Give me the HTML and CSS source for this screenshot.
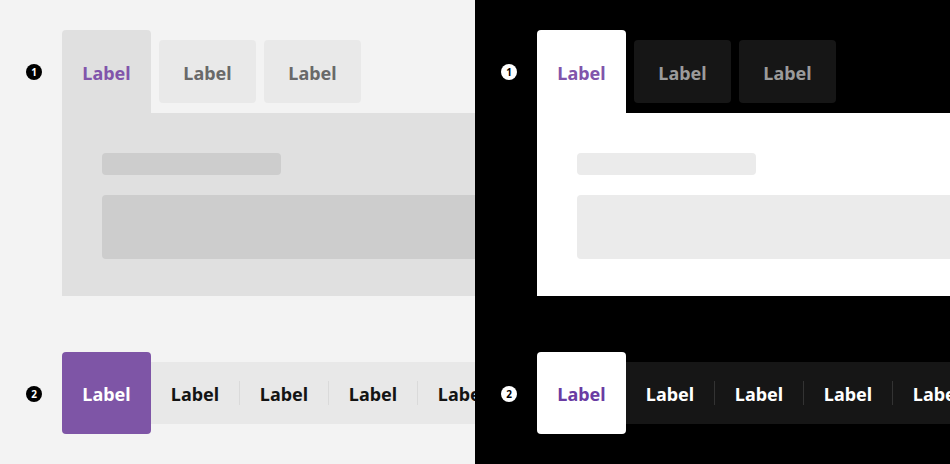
FILE: index.html
```html
<!DOCTYPE html>
<html>
<head>
<meta charset="utf-8">
<link rel="stylesheet" href="styles.css">
</head>
<body>
<div class="page">
  <section class="half light">
    <div class="example ex1">
      <span class="marker">1</span>
      <div class="tabs-block">
        <div class="tabrow">
          <div class="tab active">Label</div>
          <div class="tab">Label</div>
          <div class="tab">Label</div>
        </div>
        <div class="panel">
          <div class="sk sk-title"></div>
          <div class="sk sk-body"></div>
        </div>
      </div>
    </div>
    <div class="example ex2">
      <span class="marker">2</span>
      <div class="seg">
        <div class="seg-active">Label</div>
        <div class="seg-bar">
          <div class="seg-item">Label</div>
          <span class="sep"></span>
          <div class="seg-item">Label</div>
          <span class="sep"></span>
          <div class="seg-item">Label</div>
          <span class="sep"></span>
          <div class="seg-item">Label</div>
          <span class="sep"></span>
          <div class="seg-item">Label</div>
        </div>
      </div>
    </div>
  </section>
  <section class="half dark">
    <div class="example ex1">
      <span class="marker">1</span>
      <div class="tabs-block">
        <div class="tabrow">
          <div class="tab active">Label</div>
          <div class="tab">Label</div>
          <div class="tab">Label</div>
        </div>
        <div class="panel">
          <div class="sk sk-title"></div>
          <div class="sk sk-body"></div>
        </div>
      </div>
    </div>
    <div class="example ex2">
      <span class="marker">2</span>
      <div class="seg">
        <div class="seg-active">Label</div>
        <div class="seg-bar">
          <div class="seg-item">Label</div>
          <span class="sep"></span>
          <div class="seg-item">Label</div>
          <span class="sep"></span>
          <div class="seg-item">Label</div>
          <span class="sep"></span>
          <div class="seg-item">Label</div>
          <span class="sep"></span>
          <div class="seg-item">Label</div>
        </div>
      </div>
    </div>
  </section>
</div>
</body>
</html>
```

FILE: styles.css
```css
* { box-sizing: border-box; }
html, body { margin: 0; padding: 0; }
body {
  font-family: "Noto Sans", "Open Sans", sans-serif;
  width: 950px;
  height: 464px;
  overflow: hidden;
}
.page {
  display: flex;
  width: 950px;
  height: 464px;
}
.half {
  width: 475px;
  height: 464px;
  flex: none;
  overflow: hidden;
  padding: 30px 0 0 26px;
  display: flex;
  flex-direction: column;
  gap: 56px;
}
.light { background: #f3f3f3; }
.dark { background: #000000; }

.example {
  display: flex;
  align-items: flex-start;
  gap: 20px;
}
.marker {
  flex: none;
  width: 16px;
  height: 16px;
  border-radius: 50%;
  margin-top: 34px;
  display: flex;
  align-items: center;
  justify-content: center;
  font-size: 10px;
  font-weight: 700;
  line-height: 1;
}
.light .marker { background: #000; color: #fff; }
.dark .marker { background: #fff; color: #000; }

.tabs-block { flex: none; width: 700px; }
.tabrow {
  display: flex;
  align-items: flex-start;
  gap: 8px;
}
.tab {
  width: 97px;
  height: 63px;
  margin-top: 10px;
  border-radius: 4px;
  display: flex;
  align-items: center;
  justify-content: center;
  font-size: 18px;
  font-weight: 700;
  padding-top: 2px;
}
.tab.active {
  width: 89px;
  height: 83px;
  margin-top: 0;
  border-radius: 4px 4px 0 0;
}
.panel {
  height: 183px;
  padding: 40px;
  display: flex;
  flex-direction: column;
  gap: 20px;
}
.sk { border-radius: 4px; flex: none; }
.sk-title { width: 179px; height: 22px; }
.sk-body { width: 620px; height: 64px; }

.light .tab { background: #e9e9e9; color: #696969; }
.light .tab.active { background: #e0e0e0; color: #8155ab; }
.light .panel { background: #e0e0e0; }
.light .sk { background: #cdcdcd; }

.dark .tab { background: #161616; color: #9b9b9b; }
.dark .tab.active { background: #ffffff; color: #8155ab; }
.dark .panel { background: #ffffff; }
.dark .sk { background: #ebebeb; }

.seg {
  display: flex;
  align-items: center;
  flex: none;
}
.seg-active {
  width: 89px;
  height: 82px;
  border-radius: 4px;
  display: flex;
  align-items: center;
  justify-content: center;
  font-size: 18px;
  font-weight: 700;
  padding-top: 2px;
  flex: none;
}
.seg-bar {
  display: flex;
  align-items: center;
  height: 62px;
  flex: none;
}
.seg-item {
  width: 88px;
  display: flex;
  justify-content: center;
  font-size: 18px;
  font-weight: 700;
  padding-top: 2px;
  flex: none;
}
.sep {
  width: 1px;
  height: 24px;
  flex: none;
}

.light .seg-active { background: #7e55a6; color: #ffffff; }
.light .seg-bar { background: #e8e8e8; color: #141414; }
.light .sep { background: #dadada; }

.dark .seg-active { background: #ffffff; color: #6a3ca3; }
.dark .seg-bar { background: #161616; color: #ffffff; }
.dark .sep { background: #333333; }
```
